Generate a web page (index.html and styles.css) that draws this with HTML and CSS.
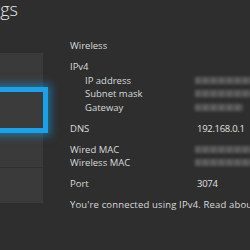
FILE: index.html
```html
<!DOCTYPE html>
<html lang="en">
<head>
  <meta charset="UTF-8" />
  <title>Settings - Network</title>
  <link rel="stylesheet" href="styles.css">
</head>
<body>
  <div class="screen">
    <aside class="sidebar">
      <h1 class="page-title">Settings</h1>
      <div class="tile"></div>
      <div class="tile tile-focused"></div>
      <div class="tile tile-sep"></div>
      <div class="tile"></div>
    </aside>

    <main class="details">
      <div class="group">
        <div class="row"><span class="label">Wireless</span></div>
      </div>

      <div class="group">
        <div class="row"><span class="label">IPv4</span></div>
        <div class="row"><span class="label sub">IP address</span><span class="hidden-value"></span></div>
        <div class="row"><span class="label sub">Subnet mask</span><span class="hidden-value"></span></div>
        <div class="row"><span class="label sub">Gateway</span><span class="hidden-value short"></span></div>
      </div>

      <div class="group">
        <div class="row"><span class="label">DNS</span><span class="value">192.168.0.1</span></div>
      </div>

      <div class="group">
        <div class="row"><span class="label">Wired MAC</span><span class="hidden-value"></span></div>
        <div class="row"><span class="label">Wireless MAC</span><span class="hidden-value"></span></div>
      </div>

      <div class="group">
        <div class="row"><span class="label">Port</span><span class="value">3074</span></div>
      </div>

      <p class="note">You're connected using IPv4. Read about using IPv6 on Xbox Live.</p>
    </main>
  </div>
</body>
</html>
```

FILE: styles.css
```css
body {
  margin: 0;
  padding: 0;
  width: 250px;
  height: 250px;
  overflow: hidden;
  background-color: #2e2e2e;
  font-family: 'Open Sans', sans-serif;
  color: #dadada;
}

.screen {
  display: flex;
  gap: 27px;
  margin-left: -160px;
}

.sidebar {
  display: flex;
  flex-direction: column;
  width: 203px;
  flex-shrink: 0;
}

.page-title {
  margin: -1px 25px 34px 0;
  font-size: 18px;
  font-weight: 300;
  line-height: 20px;
  text-align: right;
  color: #e6e6e6;
  white-space: nowrap;
}

.tile {
  height: 34px;
  background-color: #3a3a3a;
}

.tile-focused {
  box-sizing: border-box;
  height: 46px;
  margin-right: -5px;
  border: 5px solid #19a2ea;
  background-color: #3b3b3b;
  box-shadow: 0 0 8px 3px rgba(25, 162, 234, 0.5);
  position: relative;
  z-index: 1;
}

.tile-sep {
  height: 35px;
  border-bottom: 1px solid #2f2f2f;
  box-sizing: border-box;
}

.tile:last-child {
  height: 35px;
}

.details {
  display: flex;
  flex-direction: column;
  gap: 7.5px;
  padding-top: 39px;
  font-size: 9.5px;
  line-height: 13.5px;
  white-space: nowrap;
}

.row {
  display: grid;
  grid-template-columns: 127px 1fr;
  align-items: center;
  height: 13.5px;
}

.label.sub {
  padding-left: 15px;
}

.value {
  color: #e0e0e0;
  letter-spacing: -0.3px;
}

.hidden-value {
  display: block;
  width: 60px;
  height: 7px;
  margin-left: -2px;
  background: repeating-linear-gradient(90deg, #5e5e5e 0 5px, #4e4e4e 5px 8px);
  filter: blur(1.6px);
}

.hidden-value.short {
  width: 48px;
}

.note {
  margin: 0;
  letter-spacing: 0.15px;
}
```
